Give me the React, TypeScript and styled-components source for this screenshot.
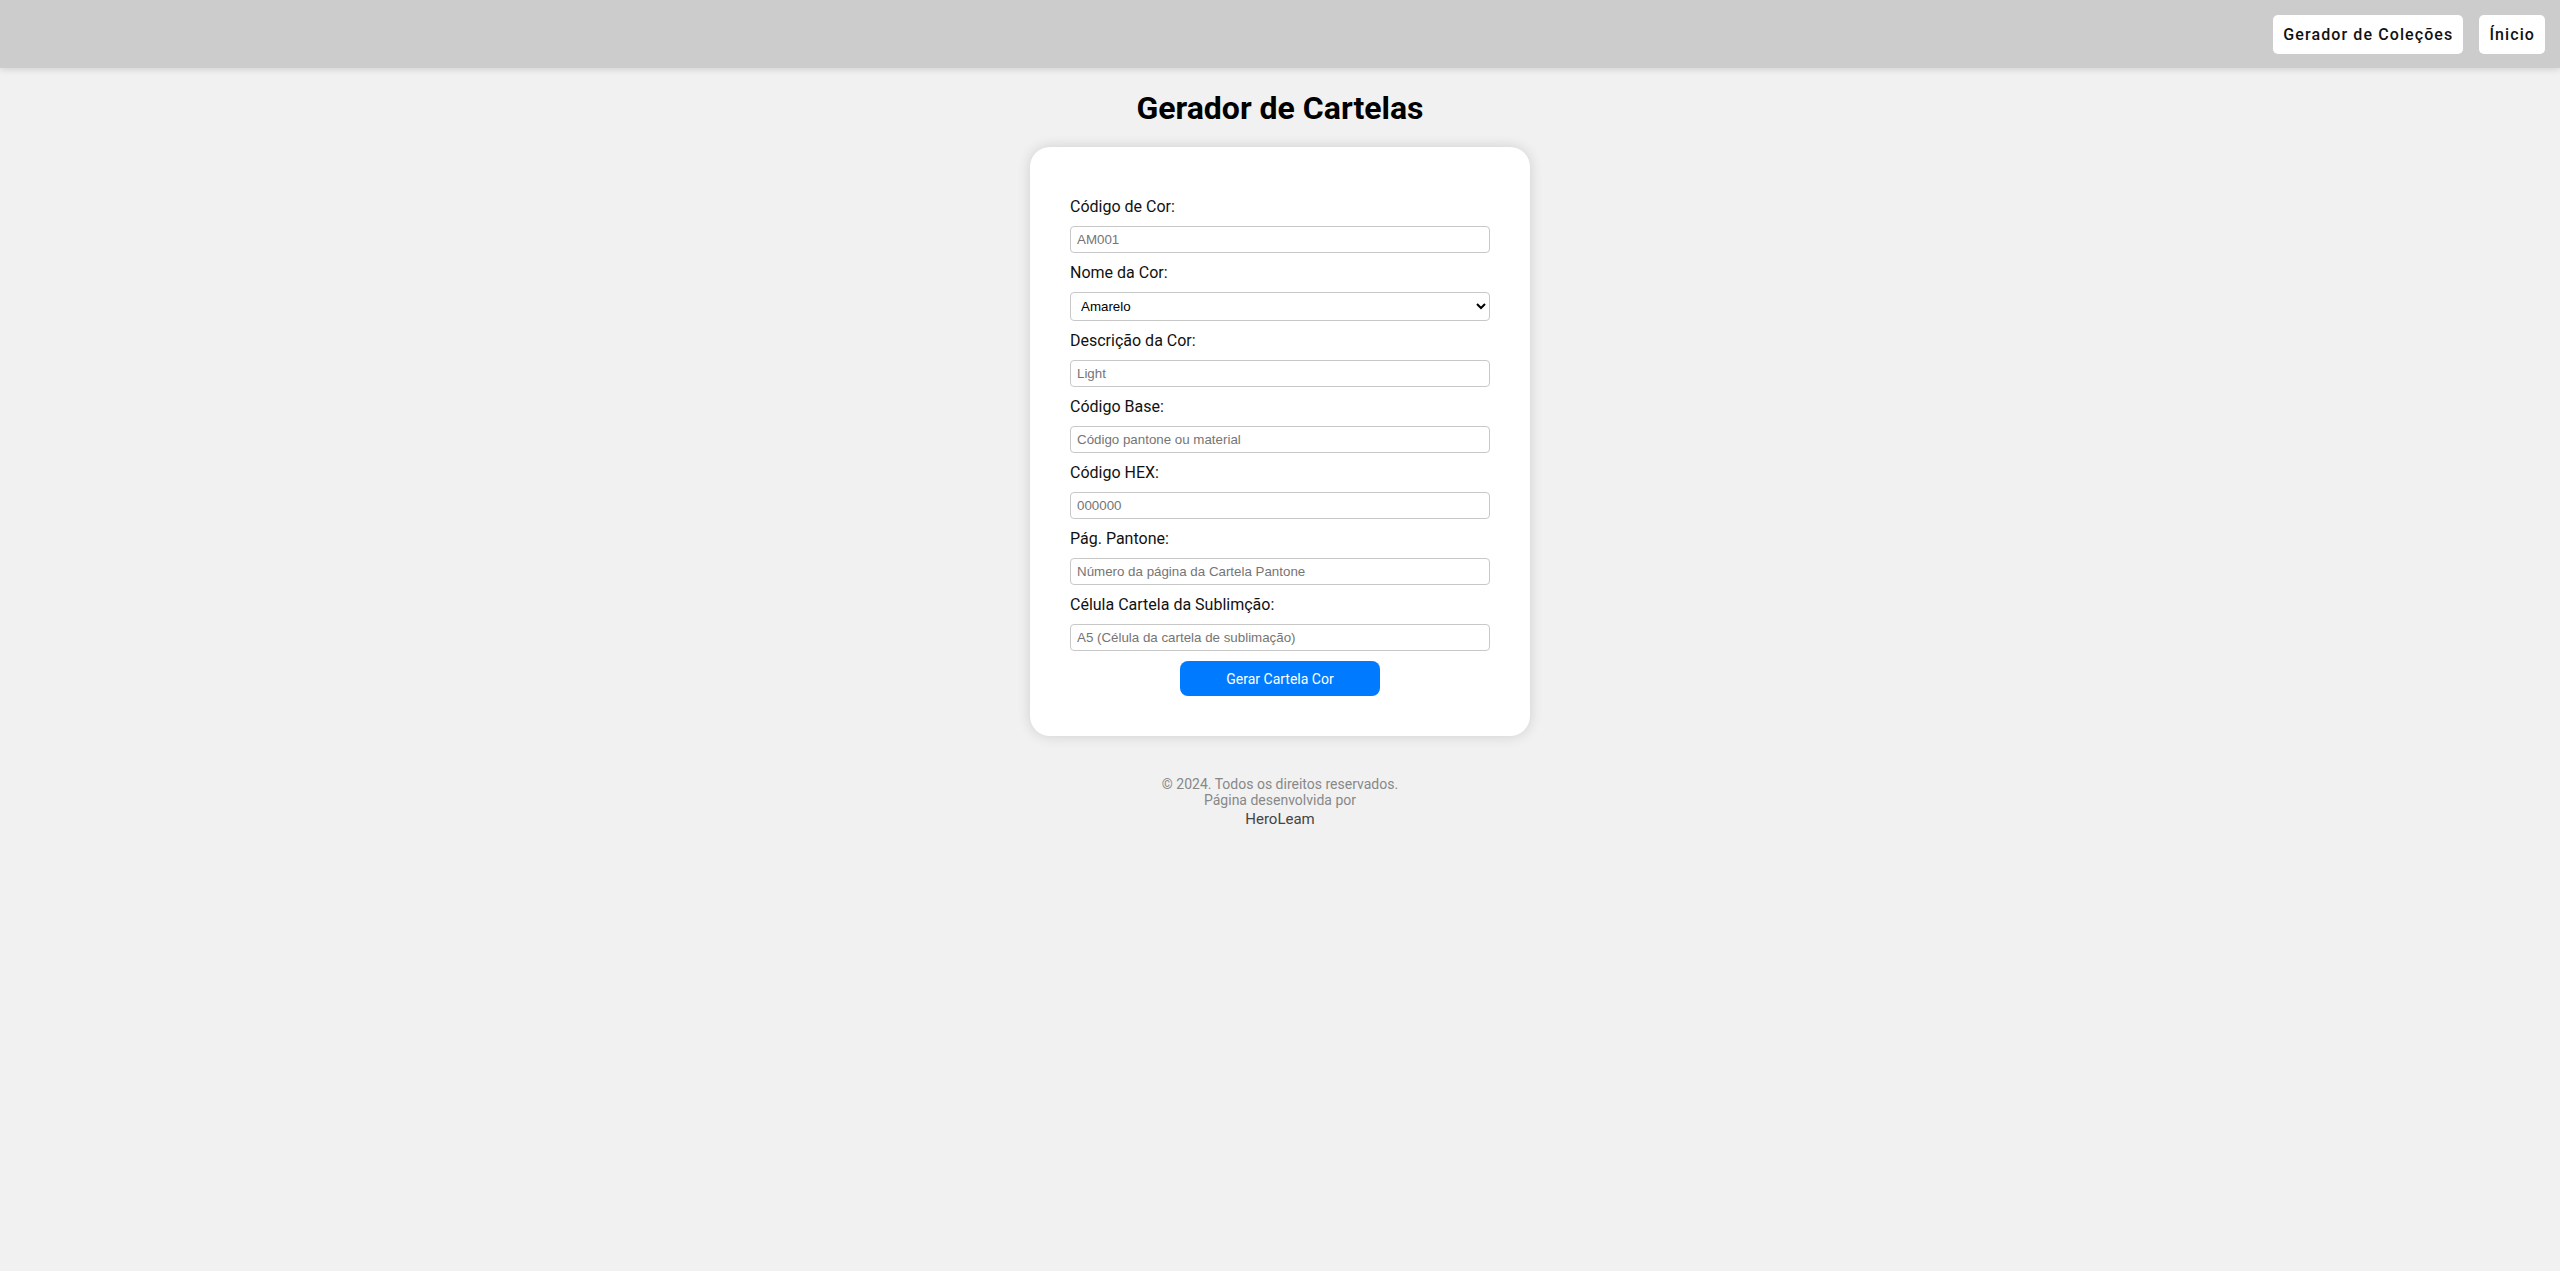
import React from "react";
import styled, { createGlobalStyle } from "styled-components";

const GlobalStyle = createGlobalStyle`
  html, body { margin: 0; padding: 0; }
  body {
    background: #f1f1f1;
    font-family: Roboto, "Liberation Sans", Arial, sans-serif;
    color: #000;
  }
  * { box-sizing: border-box; }
`;

const Header = styled.header`
  height: 68px;
  background: #cccccc;
  display: flex;
  align-items: center;
  justify-content: flex-end;
  gap: 16px;
  padding: 0 15px;
  box-shadow: 0 2px 6px rgba(0, 0, 0, 0.12);
`;

const NavButton = styled.button`
  height: 39px;
  padding: 0 10px;
  border: none;
  border-radius: 5px;
  background: #ffffff;
  color: #111;
  font-family: Roboto, sans-serif;
  font-size: 16px;
  font-weight: 500;
  letter-spacing: 1.1px;
  cursor: pointer;
`;

const Main = styled.main`
  display: flex;
  flex-direction: column;
  align-items: center;
`;

const Title = styled.h1`
  margin: 21px 0 20px;
  font-size: 32px;
  font-weight: 700;
  line-height: normal;
`;

const Card = styled.div`
  width: 500px;
  background: #fff;
  border-radius: 20px;
  padding: 50px 40px 40px;
  box-shadow: 0 0 14px rgba(0, 0, 0, 0.14);
`;

const Form = styled.form`
  display: flex;
  flex-direction: column;
`;

const Label = styled.label`
  display: block;
  font-size: 16px;
  line-height: normal;
  margin-bottom: 10px;
  color: #111;
`;

const Input = styled.input`
  width: 100%;
  height: 27px;
  margin: 0 0 10px;
  padding: 0 6px;
  border: 1px solid #c8c8c8;
  border-radius: 4px;
  font-family: "Liberation Sans", Arial, sans-serif;
  font-size: 13.333px;
  color: #000;
  &::placeholder { color: #757575; }
`;

const Select = styled.select`
  width: 100%;
  height: 29px;
  margin: 0 0 10px;
  padding: 0 6px;
  border: 1px solid #c8c8c8;
  border-radius: 4px;
  background: #fff;
  font-family: "Liberation Sans", Arial, sans-serif;
  font-size: 13.333px;
  color: #000;
`;

const SubmitButton = styled.button`
  align-self: center;
  width: 200px;
  height: 35px;
  border: none;
  border-radius: 8px;
  background: #007bff;
  color: #fff;
  font-family: Roboto, sans-serif;
  font-size: 14px;
  cursor: pointer;
`;

const Footer = styled.footer`
  margin-top: 40px;
  text-align: center;
  font-size: 14px;
  line-height: normal;
  color: #888;
`;

const FooterLine = styled.div``;

const Author = styled.div`
  margin-top: 2px;
  font-size: 15px;
  color: #444;
`;

type Field = { label: string; placeholder: string };

const fieldsTop: Field[] = [{ label: "Código de Cor:", placeholder: "AM001" }];
const fieldsBottom: Field[] = [
  { label: "Descrição da Cor:", placeholder: "Light" },
  { label: "Código Base:", placeholder: "Código pantone ou material" },
  { label: "Código HEX:", placeholder: "000000" },
  { label: "Pág. Pantone:", placeholder: "Número da página da Cartela Pantone" },
  { label: "Célula Cartela da Sublimção:", placeholder: "A5 (Célula da cartela de sublimação)" },
];

export default function App() {
  return (
    <>
      <GlobalStyle />
      <Header>
        <NavButton>Gerador de Coleções</NavButton>
        <NavButton>Ínicio</NavButton>
      </Header>
      <Main>
        <Title>Gerador de Cartelas</Title>
        <Card>
          <Form onSubmit={(e) => e.preventDefault()}>
            {fieldsTop.map((f) => (
              <React.Fragment key={f.label}>
                <Label>{f.label}</Label>
                <Input placeholder={f.placeholder} />
              </React.Fragment>
            ))}
            <Label>Nome da Cor:</Label>
            <Select defaultValue="Amarelo">
              <option>Amarelo</option>
              <option>Azul</option>
              <option>Vermelho</option>
              <option>Verde</option>
            </Select>
            {fieldsBottom.map((f) => (
              <React.Fragment key={f.label}>
                <Label>{f.label}</Label>
                <Input placeholder={f.placeholder} />
              </React.Fragment>
            ))}
            <SubmitButton type="submit">Gerar Cartela Cor</SubmitButton>
          </Form>
        </Card>
        <Footer>
          <FooterLine>© 2024. Todos os direitos reservados.</FooterLine>
          <FooterLine>Página desenvolvida por</FooterLine>
          <Author>HeroLeam</Author>
        </Footer>
      </Main>
    </>
  );
}
